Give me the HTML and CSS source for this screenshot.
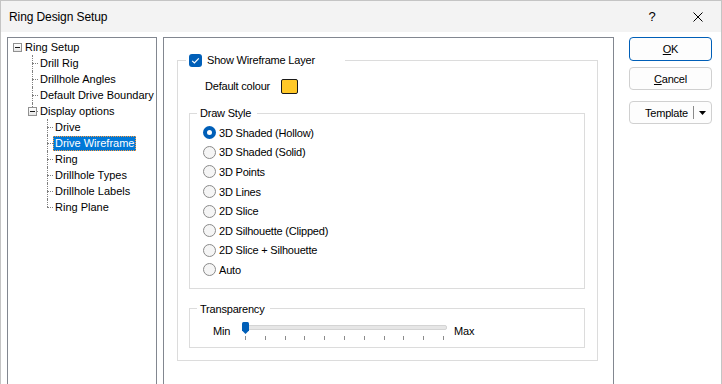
FILE: index.html
```html
<!DOCTYPE html>
<html lang="en">
<head>
    <meta charset="UTF-8">
    <title>Ring Design Setup</title>
    <link rel="stylesheet" href="styles.css">
</head>
<body>
    <div class="window">
        <!-- Title Bar -->
        <div class="titlebar">
            <span class="title">Ring Design Setup</span>
            <span class="caption-btn">?</span>
            <span class="caption-btn">
                <svg width="10" height="10" viewBox="0 0 10 10"><path d="M0.5 0.5 L9.5 9.5 M9.5 0.5 L0.5 9.5" stroke="#000" stroke-width="1" fill="none"/></svg>
            </span>
        </div>

        <div class="body">
            <!-- Options Tree -->
            <div class="tree">
                <ul class="tree-root">
                    <li class="root">
                        <div class="row"><span class="toggle"></span><span class="label">Ring Setup</span></div>
                        <ul>
                            <li><div class="row"><span class="label">Drill Rig</span></div></li>
                            <li><div class="row"><span class="label">Drillhole Angles</span></div></li>
                            <li><div class="row"><span class="label">Default Drive Boundary</span></div></li>
                            <li>
                                <div class="row"><span class="toggle"></span><span class="label">Display options</span></div>
                                <ul>
                                    <li><div class="row"><span class="label">Drive</span></div></li>
                                    <li><div class="row"><span class="label selected">Drive Wireframe</span></div></li>
                                    <li><div class="row"><span class="label">Ring</span></div></li>
                                    <li><div class="row"><span class="label">Drillhole Types</span></div></li>
                                    <li><div class="row"><span class="label">Drillhole Labels</span></div></li>
                                    <li><div class="row"><span class="label">Ring Plane</span></div></li>
                                </ul>
                            </li>
                        </ul>
                    </li>
                </ul>
            </div>

            <!-- Settings Panel -->
            <div class="panel">
                <fieldset class="group outer">
                    <legend class="check-legend">
                        <span class="checkbox">
                            <svg width="13" height="13" viewBox="0 0 13 13"><path d="M3.2 6.8 L5.4 9 L9.8 4.4" stroke="#fff" stroke-width="1.2" fill="none"/></svg>
                        </span>
                        Show Wireframe Layer
                    </legend>

                    <div class="colour-row">
                        <span class="colour-label">Default colour</span>
                        <span class="swatch"></span>
                    </div>

                    <fieldset class="group inner draw">
                        <legend>Draw Style</legend>
                        <div class="radio checked"><span class="dot"></span>3D Shaded (Hollow)</div>
                        <div class="radio"><span class="dot"></span>3D Shaded (Solid)</div>
                        <div class="radio"><span class="dot"></span>3D Points</div>
                        <div class="radio"><span class="dot"></span>3D Lines</div>
                        <div class="radio"><span class="dot"></span>2D Slice</div>
                        <div class="radio"><span class="dot"></span>2D Silhouette (Clipped)</div>
                        <div class="radio"><span class="dot"></span>2D Slice + Silhouette</div>
                        <div class="radio"><span class="dot"></span>Auto</div>
                    </fieldset>

                    <fieldset class="group inner transparency">
                        <legend>Transparency</legend>
                        <div class="slider-row">
                            <span class="slider-label">Min</span>
                            <div class="slider">
                                <div class="track"></div>
                                <svg class="thumb" width="7" height="12" viewBox="0 0 7 12"><path d="M0 1.5 Q0 0 1.5 0 H5.5 Q7 0 7 1.5 V8.5 L3.5 12 L0 8.5 Z" fill="#005fb8"/></svg>
                                <div class="ticks">
                                    <span></span><span></span><span></span><span></span><span></span><span></span>
                                    <span></span><span></span><span></span><span></span><span></span>
                                </div>
                            </div>
                            <span class="slider-label max">Max</span>
                        </div>
                    </fieldset>
                </fieldset>
            </div>

            <!-- Dialog Buttons -->
            <div class="buttons">
                <button class="btn default"><u>O</u>K</button>
                <button class="btn cancel"><u>C</u>ancel</button>
                <button class="btn template">
                    <span>Template</span>
                    <span class="sep"></span>
                    <svg width="7" height="4" viewBox="0 0 7 4"><path d="M0 0 H7 L3.5 4 Z" fill="#000"/></svg>
                </button>
            </div>
        </div>
    </div>
</body>
</html>
```

FILE: styles.css
```css
* {
    box-sizing: border-box;
}

body {
    margin: 0;
    font-family: "Liberation Sans", Arial, sans-serif;
    font-size: 11px;
    color: #000;
    background: #fff;
}

/* Window frame */
.window {
    width: 722px;
    height: 384px;
    border: 1px solid #c4c4c4;
    border-bottom: none;
    display: flex;
    flex-direction: column;
    overflow: hidden;
    background: #fff;
}

.titlebar {
    flex: none;
    height: 31px;
    background: #f3f3f3;
    display: flex;
    align-items: center;
    padding-left: 8px;
    font-size: 12px;
    letter-spacing: -0.1px;
}

.titlebar .title {
    flex: 1;
}

.caption-btn {
    width: 46px;
    height: 31px;
    display: flex;
    align-items: center;
    justify-content: center;
    font-size: 13px;
}

.body {
    flex: 1;
    min-height: 0;
    display: flex;
    align-items: flex-start;
    padding: 5px 0 0 6px;
}

/* Tree */
.tree {
    width: 150px;
    height: 400px;
    border: 1px solid #828790;
    padding-top: 1px;
    flex: none;
}

.tree ul {
    list-style: none;
    margin: 0;
    padding: 0 0 0 9px;
}

.tree li {
    position: relative;
    padding-left: 6px;
}

.tree .row {
    height: 16px;
    display: flex;
    align-items: center;
}

.tree .label {
    display: inline-block;
    line-height: 13px;
    padding: 0 1px;
    border: 1px solid transparent;
    white-space: nowrap;
}

.tree .label.selected {
    background: #0078d7;
    color: #fff;
    border: 1px dotted #ff9a3c;
}

/* dotted connector lines */
.tree li:not(.root)::before {
    content: "";
    position: absolute;
    left: 0;
    top: 8px;
    width: 6px;
    border-top: 1px dotted #808080;
}

.tree li:not(.root)::after {
    content: "";
    position: absolute;
    left: 0;
    top: 0;
    bottom: 0;
    border-left: 1px dotted #808080;
}

.tree li:not(.root):last-child::after {
    bottom: auto;
    height: 8px;
}

.tree .toggle {
    position: absolute;
    left: -4px;
    top: 4px;
    width: 9px;
    height: 9px;
    border: 1px solid #919191;
    background: linear-gradient(#fff, #e6e6e6);
    z-index: 1;
}

.tree .toggle::before {
    content: "";
    position: absolute;
    left: 1px;
    top: 3px;
    width: 5px;
    border-top: 1px solid #1a1a1a;
}

/* Settings panel */
.panel {
    width: 451px;
    height: 400px;
    margin-left: 6px;
    border: 1px solid #828790;
    flex: none;
    letter-spacing: -0.2px;
}

.group {
    margin: 0;
    padding: 0;
    border: 1px solid #dcdcdc;
    min-width: 0;
}

.group legend {
    margin-left: 7px;
    padding: 0 6px 0 3px;
    line-height: 16px;
}

.outer {
    width: 421px;
    margin: 14px 0 0 13px;
    padding-bottom: 12px;
}

.outer .check-legend {
    margin-left: 8px;
    padding: 0 30px 0 3px;
    display: flex;
    align-items: center;
}

.checkbox {
    width: 13px;
    height: 13px;
    border-radius: 3px;
    background: #005fb8;
    margin-right: 5px;
    display: flex;
}

.colour-row {
    margin-top: 10px;
    padding-left: 27px;
    height: 16px;
    display: flex;
    align-items: center;
}

.colour-label {
    width: 76px;
}

.swatch {
    width: 17px;
    height: 15px;
    background: #ffc828;
    border: 1px solid #1a1a1a;
    border-radius: 2px;
}

.inner {
    margin: 0 12px 0 11px;
}

.draw {
    margin-top: 11px;
    padding: 2px 0 8px 0;
}

.radio {
    height: 19.6px;
    display: flex;
    align-items: center;
    padding-left: 13px;
}

.radio .dot {
    width: 13px;
    height: 13px;
    border-radius: 50%;
    border: 1px solid #8a8a8a;
    background: #f5f5f5;
    margin-right: 3px;
}

.radio.checked .dot {
    border: 4px solid #005fb8;
    background: #fff;
}

.transparency {
    margin-top: 12px;
    padding-bottom: 6px;
}

.slider-row {
    margin-top: 4px;
    height: 20px;
    display: flex;
    align-items: flex-start;
    padding-left: 23px;
}

.slider-label {
    margin-top: 2px;
    line-height: 16px;
    width: 29px;
}

.slider-label.max {
    margin-left: 7px;
}

.slider {
    position: relative;
    width: 205px;
    height: 20px;
}

.track {
    margin-top: 4px;
    height: 5px;
    background: #e6e6e6;
    border: 1px solid #d4d4d4;
    border-radius: 2px;
}

.thumb {
    position: absolute;
    left: 0;
    top: 1px;
}

.ticks {
    margin-top: 6px;
    padding: 0 3px;
    display: flex;
    justify-content: space-between;
}

.ticks span {
    width: 1px;
    height: 4px;
    background: #8c8c8c;
}

/* Buttons column */
.buttons {
    width: 83px;
    margin-left: 15px;
    display: flex;
    flex-direction: column;
    flex: none;
}

.btn {
    height: 23px;
    font-family: "Liberation Sans", Arial, sans-serif;
    font-size: 11px;
    letter-spacing: -0.2px;
    color: #000;
    background: #fdfdfd;
    border: 1px solid #d0d0d0;
    border-radius: 4px;
    padding: 0;
}

.btn.default {
    height: 24px;
    border-color: #005fb8;
}

.btn.cancel {
    margin-top: 6px;
}

.btn.template {
    margin-top: 11px;
    display: flex;
    align-items: center;
    justify-content: flex-end;
}

.btn.template .sep {
    width: 1px;
    height: 13px;
    background: #8a8a8a;
    margin: 0 5px 0 5px;
}

.btn.template svg {
    margin-right: 5px;
}
```
